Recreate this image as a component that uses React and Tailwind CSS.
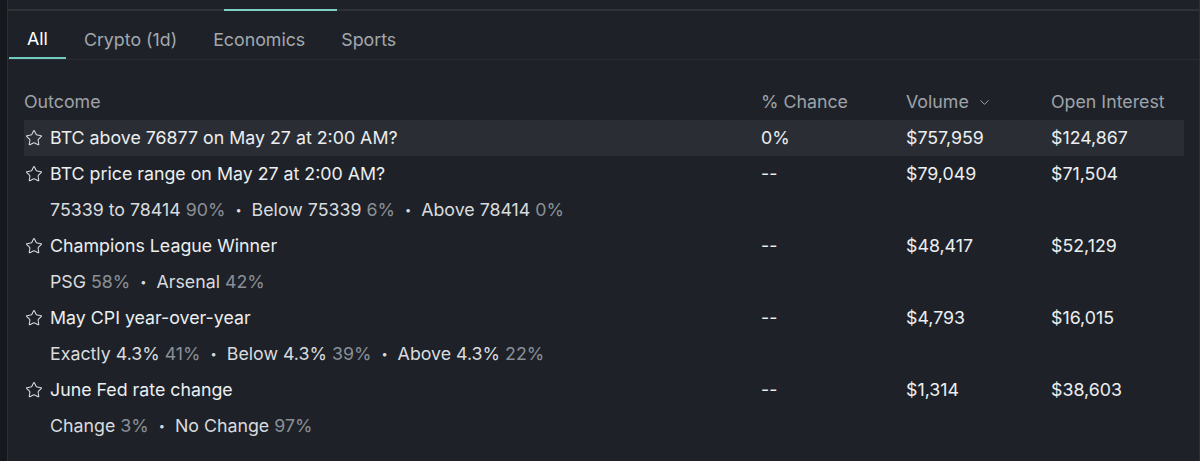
import { ChevronDown, Star } from 'lucide-react';

const tabs = ['All', 'Crypto (1d)', 'Economics', 'Sports'];

const markets = [
  { title: 'BTC above 76877 on May 27 at 2:00 AM?', chance: '0%', volume: '$757,959', oi: '$124,867', active: true },
  {
    title: 'BTC price range on May 27 at 2:00 AM?',
    chance: '--',
    volume: '$79,049',
    oi: '$71,504',
    outcomes: [
      ['75339 to 78414', '90%'],
      ['Below 75339', '6%'],
      ['Above 78414', '0%'],
    ],
  },
  {
    title: 'Champions League Winner',
    chance: '--',
    volume: '$48,417',
    oi: '$52,129',
    outcomes: [
      ['PSG', '58%'],
      ['Arsenal', '42%'],
    ],
  },
  {
    title: 'May CPI year-over-year',
    chance: '--',
    volume: '$4,793',
    oi: '$16,015',
    outcomes: [
      ['Exactly 4.3%', '41%'],
      ['Below 4.3%', '39%'],
      ['Above 4.3%', '22%'],
    ],
  },
  {
    title: 'June Fed rate change',
    chance: '--',
    volume: '$1,314',
    oi: '$38,603',
    outcomes: [
      ['Change', '3%'],
      ['No Change', '97%'],
    ],
  },
];

function MarketRow({ m }) {
  return (
    <>
      <div
        className={`grid grid-cols-[737px_145px_145px_1fr] h-[36px] items-center text-[#eceef0] ${
          m.active ? 'bg-[#2a2e34]' : ''
        }`}
      >
        <div className="flex items-center gap-[7px] pl-[1px]">
          <Star size={18} strokeWidth={1.4} className="text-[#d8dadd]" />
          <span>{m.title}</span>
        </div>
        <div>{m.chance}</div>
        <div>{m.volume}</div>
        <div>{m.oi}</div>
      </div>
      {m.outcomes && (
        <div className="h-[36px] flex items-center pl-[26px] text-[#d9dbde]">
          {m.outcomes.map(([name, pct], i) => (
            <span key={name} className="flex items-center">
              {i > 0 && <span className="mx-[10px] text-[#d9dbde] text-[11px]">•</span>}
              <span>{name}</span>
              <span className="ml-[5px] text-[#8a8f96]">{pct}</span>
            </span>
          ))}
        </div>
      )}
    </>
  );
}

export default function App() {
  return (
    <div className="w-[1200px] h-[461px] bg-[#15181c] flex font-['Inter',sans-serif] text-[17.8px] overflow-hidden">
      <div className="w-[7px] shrink-0" />
      <div className="flex-1 bg-[#1e2228] border-l border-r border-[#2c3036] flex flex-col">
        {/* top strip from the panel above */}
        <div className="h-[11px] border-b-2 border-[#2f3236] relative shrink-0">
          <div className="absolute left-[216px] bottom-[-2px] w-[113px] h-[2px] bg-[#7fd0c6]" />
        </div>

        <div className="flex pl-[1px] h-[49px] border-b border-[#2a2e34] shrink-0">
          {tabs.map((t, i) => (
            <div
              key={t}
              className={`px-[18px] flex items-center pt-[10px] ${
                i === 0 ? 'text-white border-b-2 border-[#6fcbbf]' : 'text-[#a3a8ae]'
              }`}
            >
              {t}
            </div>
          ))}
        </div>

        <div className="pl-[16px] pr-[15px] pt-[24px]">
          <div className="grid grid-cols-[737px_145px_145px_1fr] h-[36px] items-center text-[#9ea3a9]">
            <div>Outcome</div>
            <div>% Chance</div>
            <div className="flex items-center gap-[8px]">
              Volume <ChevronDown size={15} strokeWidth={1.6} />
            </div>
            <div>Open Interest</div>
          </div>
          {markets.map((m) => (
            <MarketRow key={m.title} m={m} />
          ))}
        </div>
      </div>
    </div>
  );
}
